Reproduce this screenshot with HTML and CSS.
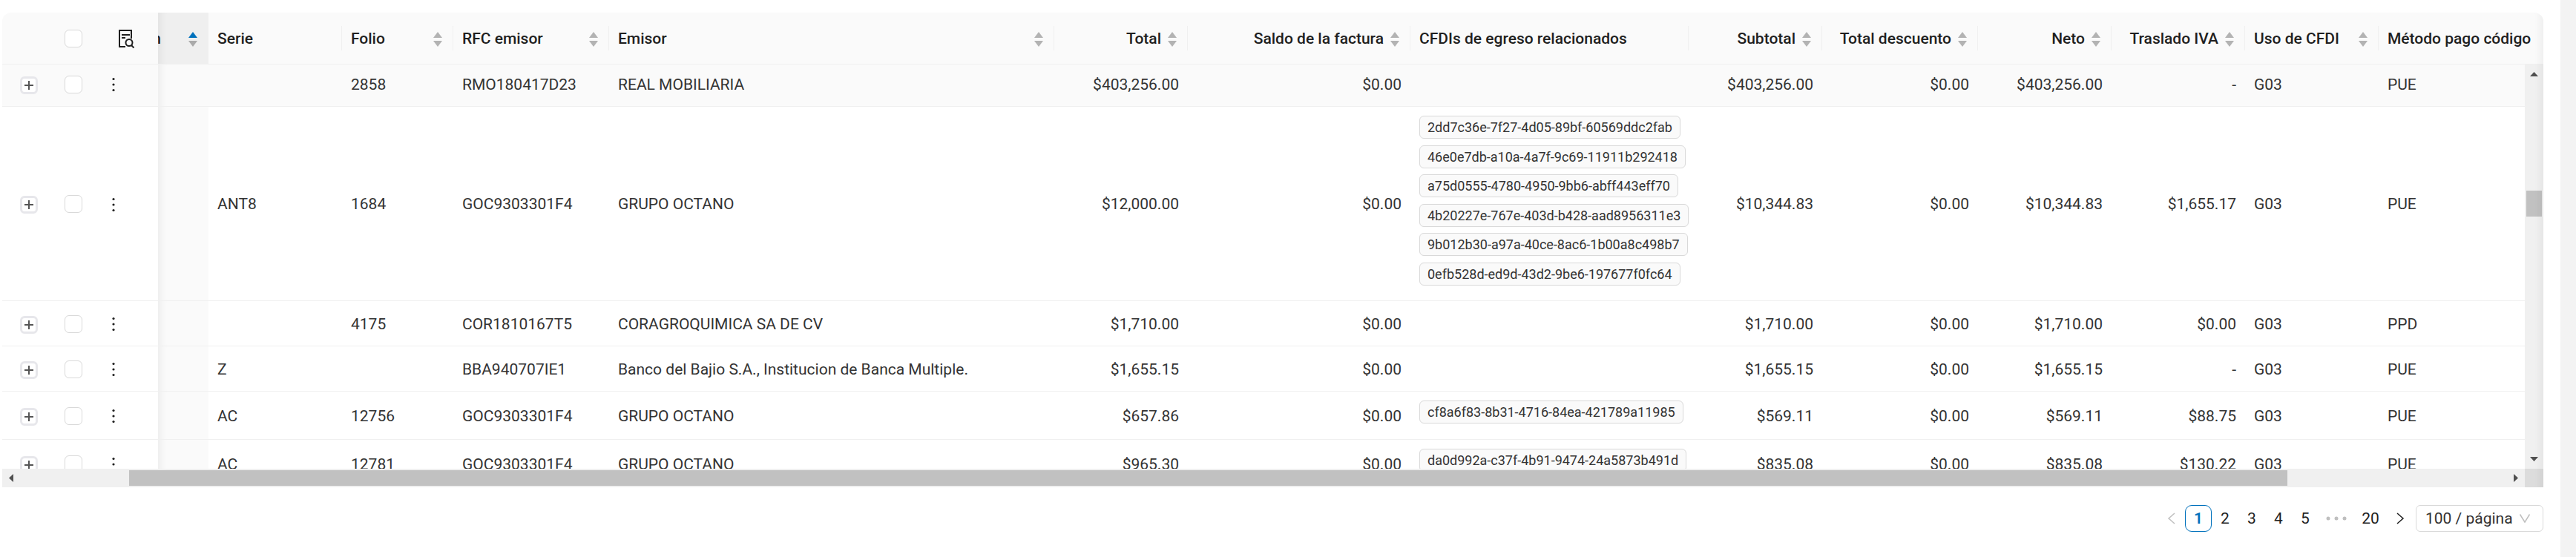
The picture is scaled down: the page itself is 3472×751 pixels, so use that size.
FILE: index.html
```
<!DOCTYPE html>
<html lang="es">
<head>
<meta charset="utf-8">
<title>Facturas</title>
<link rel="stylesheet" href="styles.css">
</head>
<body>
<svg class="defs" aria-hidden="true">
  <symbol id="sort" viewBox="0 0 18 22"><path class="up" d="M9 1l6 8H3z"/><path class="down" d="M9 21l6-8H3z"/></symbol>
  <symbol id="plus" viewBox="0 0 18 18"><path d="M9 3v12M3 9h12" stroke="#555" stroke-width="2"/></symbol>
  <symbol id="dots" viewBox="0 0 6 20"><circle cx="3" cy="2.5" r="1.6"/><circle cx="3" cy="10" r="1.6"/><circle cx="3" cy="17.5" r="1.6"/></symbol>
</svg>
<div class="page">
  <main class="main">
    <div class="grid">
      <div class="viewport">
        <table class="table">
          <colgroup>
            <col class="w72"><col class="w48"><col class="w90"><col class="w68"><col class="w180"><col class="w150"><col class="w210"><col><col class="w180"><col class="w300"><col class="w375"><col class="w180"><col class="w210"><col class="w180"><col class="w180"><col class="w180"><col class="w222">
          </colgroup>
          <thead>
            <tr>
              <th></th>
              <th class="center"><input class="check" type="checkbox" aria-label="Seleccionar todo"></th>
              <th class="center"><button class="icon-btn" type="button" aria-label="Ver detalle"><svg width="28" height="26" viewBox="-4 0 28 26" fill="none" stroke="#1f1f1f" stroke-width="2"><path d="M11 24H3V2h16v11"/><path d="M6 8h11M6 12h5"/><circle cx="16" cy="18.500" r="4.500"/><path d="M19 22l3.500 3.500"/></svg></button></th>
              <th class="sorted edge"><div class="head"><span class="cut">n</span><svg class="sorter asc"><use href="#sort"/></svg></div></th>
              <th class="sep">Serie</th>
              <th class="sep"><div class="head"><span>Folio</span><svg class="sorter"><use href="#sort"/></svg></div></th>
              <th class="sep"><div class="head"><span>RFC emisor</span><svg class="sorter"><use href="#sort"/></svg></div></th>
              <th class="sep"><div class="head"><span>Emisor</span><svg class="sorter"><use href="#sort"/></svg></div></th>
              <th class="sep"><div class="head end"><span>Total</span><svg class="sorter"><use href="#sort"/></svg></div></th>
              <th class="sep"><div class="head end"><span>Saldo de la factura</span><svg class="sorter"><use href="#sort"/></svg></div></th>
              <th class="sep">CFDIs de egreso relacionados</th>
              <th class="sep"><div class="head end"><span>Subtotal</span><svg class="sorter"><use href="#sort"/></svg></div></th>
              <th class="sep"><div class="head end"><span>Total descuento</span><svg class="sorter"><use href="#sort"/></svg></div></th>
              <th class="sep"><div class="head end"><span>Neto</span><svg class="sorter"><use href="#sort"/></svg></div></th>
              <th class="sep"><div class="head end"><span>Traslado IVA</span><svg class="sorter"><use href="#sort"/></svg></div></th>
              <th class="sep"><div class="head"><span>Uso de CFDI</span><svg class="sorter"><use href="#sort"/></svg></div></th>
              <th>Método pago código</th>
            </tr>
          </thead>
          <tbody>
            <tr class="hovered">
              <td class="expand"><button class="plus" type="button" aria-label="Expandir"><svg><use href="#plus"/></svg></button></td>
              <td class="center"><input class="check" type="checkbox" aria-label="Seleccionar 2858"></td>
              <td><button class="more" type="button" aria-label="Acciones"><svg><use href="#dots"/></svg></button></td>
              <td class="edge mark"></td><td></td><td>2858</td><td>RMO180417D23</td><td>REAL MOBILIARIA</td>
              <td class="num">$403,256.00</td><td class="num">$0.00</td><td></td><td class="num">$403,256.00</td><td class="num">$0.00</td><td class="num">$403,256.00</td><td class="num">-</td><td>G03</td><td>PUE</td>
            </tr>
            <tr>
              <td class="expand"><button class="plus" type="button" aria-label="Expandir"><svg><use href="#plus"/></svg></button></td>
              <td class="center"><input class="check" type="checkbox" aria-label="Seleccionar 1684"></td>
              <td><button class="more" type="button" aria-label="Acciones"><svg><use href="#dots"/></svg></button></td>
              <td class="edge mark"></td><td>ANT8</td><td>1684</td><td>GOC9303301F4</td><td>GRUPO OCTANO</td>
              <td class="num">$12,000.00</td><td class="num">$0.00</td>
              <td class="tag-cell"><div class="tags"><span class="tag">2dd7c36e-7f27-4d05-89bf-60569ddc2fab</span><span class="tag">46e0e7db-a10a-4a7f-9c69-11911b292418</span><span class="tag">a75d0555-4780-4950-9bb6-abff443eff70</span><span class="tag">4b20227e-767e-403d-b428-aad8956311e3</span><span class="tag">9b012b30-a97a-40ce-8ac6-1b00a8c498b7</span><span class="tag">0efb528d-ed9d-43d2-9be6-197677f0fc64</span></div></td>
              <td class="num">$10,344.83</td><td class="num">$0.00</td><td class="num">$10,344.83</td><td class="num">$1,655.17</td><td>G03</td><td>PUE</td>
            </tr>
            <tr>
              <td class="expand"><button class="plus" type="button" aria-label="Expandir"><svg><use href="#plus"/></svg></button></td>
              <td class="center"><input class="check" type="checkbox" aria-label="Seleccionar 4175"></td>
              <td><button class="more" type="button" aria-label="Acciones"><svg><use href="#dots"/></svg></button></td>
              <td class="edge mark"></td><td></td><td>4175</td><td>COR1810167T5</td><td>CORAGROQUIMICA SA DE CV</td>
              <td class="num">$1,710.00</td><td class="num">$0.00</td><td></td><td class="num">$1,710.00</td><td class="num">$0.00</td><td class="num">$1,710.00</td><td class="num">$0.00</td><td>G03</td><td>PPD</td>
            </tr>
            <tr>
              <td class="expand"><button class="plus" type="button" aria-label="Expandir"><svg><use href="#plus"/></svg></button></td>
              <td class="center"><input class="check" type="checkbox" aria-label="Seleccionar Z"></td>
              <td><button class="more" type="button" aria-label="Acciones"><svg><use href="#dots"/></svg></button></td>
              <td class="edge mark"></td><td>Z</td><td></td><td>BBA940707IE1</td><td>Banco del Bajio S.A., Institucion de Banca Multiple.</td>
              <td class="num">$1,655.15</td><td class="num">$0.00</td><td></td><td class="num">$1,655.15</td><td class="num">$0.00</td><td class="num">$1,655.15</td><td class="num">-</td><td>G03</td><td>PUE</td>
            </tr>
            <tr>
              <td class="expand"><button class="plus" type="button" aria-label="Expandir"><svg><use href="#plus"/></svg></button></td>
              <td class="center"><input class="check" type="checkbox" aria-label="Seleccionar 12756"></td>
              <td><button class="more" type="button" aria-label="Acciones"><svg><use href="#dots"/></svg></button></td>
              <td class="edge mark"></td><td>AC</td><td>12756</td><td>GOC9303301F4</td><td>GRUPO OCTANO</td>
              <td class="num">$657.86</td><td class="num">$0.00</td><td class="tag-cell"><div class="tags"><span class="tag">cf8a6f83-8b31-4716-84ea-421789a11985</span></div></td><td class="num">$569.11</td><td class="num">$0.00</td><td class="num">$569.11</td><td class="num">$88.75</td><td>G03</td><td>PUE</td>
            </tr>
            <tr>
              <td class="expand"><button class="plus" type="button" aria-label="Expandir"><svg><use href="#plus"/></svg></button></td>
              <td class="center"><input class="check" type="checkbox" aria-label="Seleccionar 12781"></td>
              <td><button class="more" type="button" aria-label="Acciones"><svg><use href="#dots"/></svg></button></td>
              <td class="edge mark"></td><td>AC</td><td>12781</td><td>GOC9303301F4</td><td>GRUPO OCTANO</td>
              <td class="num">$965.30</td><td class="num">$0.00</td><td class="tag-cell"><div class="tags"><span class="tag">da0d992a-c37f-4b91-9474-24a5873b491d</span></div></td><td class="num">$835.08</td><td class="num">$0.00</td><td class="num">$835.08</td><td class="num">$130.22</td><td>G03</td><td>PUE</td>
            </tr>
          </tbody>
        </table>
      </div>
      <div class="vbar">
        <svg width="25" height="25"><path d="M7 16h11l-5.500-6z"/></svg>
        <div class="vtrack"><div class="vthumb"></div></div>
        <svg width="25" height="25"><path d="M7 9h11l-5.500 6z"/></svg>
      </div>
      <div class="hbar">
        <svg width="25" height="25"><path d="M15 7v11l-6-5.500z"/></svg>
        <div class="htrack"><div class="hthumb"></div></div>
        <svg width="25" height="25"><path d="M10 7v11l6-5.500z"/></svg>
        <div class="corner"></div>
      </div>
      <div class="fade"></div>
    </div>
    <nav class="pager" aria-label="Paginación">
      <button class="page-btn" type="button" disabled aria-label="Anterior"><svg width="12" height="18" viewBox="0 0 12 18"><path d="M10 2L2 9l8 7"/></svg></button>
      <button class="page-btn current" type="button">1</button>
      <button class="page-btn" type="button">2</button>
      <button class="page-btn" type="button">3</button>
      <button class="page-btn" type="button">4</button>
      <button class="page-btn" type="button">5</button>
      <button class="page-btn jump" type="button" aria-label="5 páginas siguientes"><svg width="28" height="6" viewBox="0 0 28 6"><circle cx="3" cy="3" r="2.500"/><circle cx="14" cy="3" r="2.500"/><circle cx="25" cy="3" r="2.500"/></svg></button>
      <button class="page-btn last" type="button">20</button>
      <button class="page-btn" type="button" aria-label="Siguiente"><svg width="12" height="18" viewBox="0 0 12 18"><path d="M2 2l8 7-8 7"/></svg></button>
      <div class="size">
        <select class="size-select" aria-label="Tamaño de página"><option>100 / página</option></select>
        <svg class="chevron" width="16" height="14" viewBox="0 0 16 14"><path d="M1.500 1.500L8 12l6.500-10.500"/></svg>
      </div>
    </nav>
  </main>
  <div class="gutter"></div>
</div>
</body>
</html>
```
FILE: styles.css
```
* { box-sizing: border-box; }
body {
  margin: 0;
  background: #fff;
  color: #1f1f1f;
  font: 21px/33px Roboto, "Liberation Sans", sans-serif;
}
button { padding: 0; border: 0; background: none; color: inherit; font: inherit; }
.defs { display: none; }
.page { display: flex; min-height: 100vh; }
.main { flex: 1; min-width: 0; padding: 17px 23px 0 3px; }
.gutter { width: 21px; background: #f3f3f3; }

.grid { position: relative; overflow: hidden; border-radius: 12px 12px 0 0; }
.viewport { height: 615px; overflow: hidden; }
.table { width: 100%; border-collapse: separate; border-spacing: 0; table-layout: fixed; }
.w48 { width: 48px; }
.w68 { width: 68px; }
.w72 { width: 72px; }
.w90 { width: 90px; }
.w150 { width: 150px; }
.w180 { width: 180px; }
.w210 { width: 210px; }
.w222 { width: 222px; }
.w300 { width: 300px; }
.w375 { width: 375px; }

th, td {
  padding: 13px 12px 11px;
  border-bottom: 1px solid #f0f0f0;
  text-align: left;
  vertical-align: middle;
  white-space: nowrap;
}
th { height: 70px; background: #fafafa; font-weight: 500; }
td { height: 61px; color: #333; }
.sep {
  background: linear-gradient(#f0f0f0, #f0f0f0) right center / 1px 33px no-repeat #fafafa;
}
.sorted { padding-left: 0; background: #efefef; }
.mark { background: #fafafa; }
.edge { box-shadow: inset 15px 0 12px -12px rgba(5, 5, 5, 0.06); }
.hovered td { height: 57px; padding-top: 9px; background: #fafafa; }
.center { padding: 0; text-align: center; }
.hovered .center { padding: 0 0 3px; }
.num { text-align: right; }
.tag-cell { padding: 12px; }

.head { display: flex; align-items: center; justify-content: space-between; gap: 6px; }
.head.end { justify-content: flex-end; }
.cut { display: flex; justify-content: flex-end; width: 4px; overflow: hidden; }
.sorter { width: 18px; height: 22px; color: #b3b3b3; fill: #b3b3b3; }
.sorter.asc { color: #0071bc; fill: #aaa; }
.up { fill: currentColor; }

.check {
  appearance: none;
  display: inline-block;
  width: 24px;
  height: 24px;
  margin: 0;
  border: 1px solid #d9d9d9;
  border-radius: 6px;
  background: #fff;
  vertical-align: middle;
}
.icon-btn { display: inline-flex; vertical-align: middle; }
.expand { padding: 3px 0 0 24px; }
.hovered .expand { padding: 0 0 0 24px; }
.plus {
  display: flex;
  width: 24px;
  height: 24px;
  border: 3px solid #e7e7eb;
  border-radius: 6px;
  background: #fff;
}
.plus svg { width: 18px; height: 18px; }
.more { display: flex; align-items: center; justify-content: center; width: 36px; height: 22px; color: #1f1f1f; }
.more svg { width: 6px; height: 20px; fill: currentColor; }

.tags { display: flex; flex-direction: column; align-items: flex-start; }
.tag {
  height: 31px;
  margin-bottom: 8px;
  padding: 0 10px;
  border: 1px solid #d9d9d9;
  border-radius: 6px;
  background: #fafafa;
  font-size: 18px;
  line-height: 29px;
}
.tag:nth-child(odd) { margin-bottom: 9px; }

.vbar svg, .hbar svg { flex: none; fill: #505050; }
.vbar {
  position: absolute;
  top: 70px;
  right: 0;
  bottom: 25px;
  display: flex;
  flex-direction: column;
  width: 25px;
  background: #f0f0f0;
}
.vtrack { flex: 1; padding: 145px 2px 0; }
.vthumb { height: 35px; background: #c1c1c1; }
.hbar { display: flex; height: 25px; background: #f0f0f0; }
.htrack { flex: 1; display: flex; padding: 2px 295px 2px 146px; }
.hthumb { flex: 1; background: #c1c1c1; }
.corner { width: 25px; background: #dcdcdc; }
.fade {
  position: absolute;
  top: 0;
  right: 0;
  bottom: 0;
  width: 25px;
  box-shadow: inset -15px 0 12px -12px rgba(5, 5, 5, 0.06);
}

.pager { display: flex; align-items: center; justify-content: flex-end; margin-top: 24px; }
.page-btn {
  display: flex;
  align-items: center;
  justify-content: center;
  width: 36px;
  height: 36px;
  border-radius: 9px;
}
.page-btn svg { fill: none; stroke: #1f1f1f; stroke-width: 1.5; }
.page-btn:disabled svg { stroke: #bfbfbf; }
.current { border: 1px solid #0071bc; color: #0071bc; font-weight: 600; }
.jump { width: 48px; }
.page-btn.jump svg { fill: #bfbfbf; stroke: none; }
.last { width: 44px; }
.size { position: relative; margin-left: 3px; }
.size-select {
  appearance: none;
  display: block;
  width: 172px;
  height: 36px;
  padding: 0 40px 0 12px;
  border: 1px solid #d9d9d9;
  border-radius: 6px;
  background: #fff;
  color: #333;
  font: inherit;
}
.chevron {
  position: absolute;
  top: 11px;
  right: 17px;
  fill: none;
  stroke: #bfbfbf;
  stroke-width: 1.5;
  pointer-events: none;
}
```
